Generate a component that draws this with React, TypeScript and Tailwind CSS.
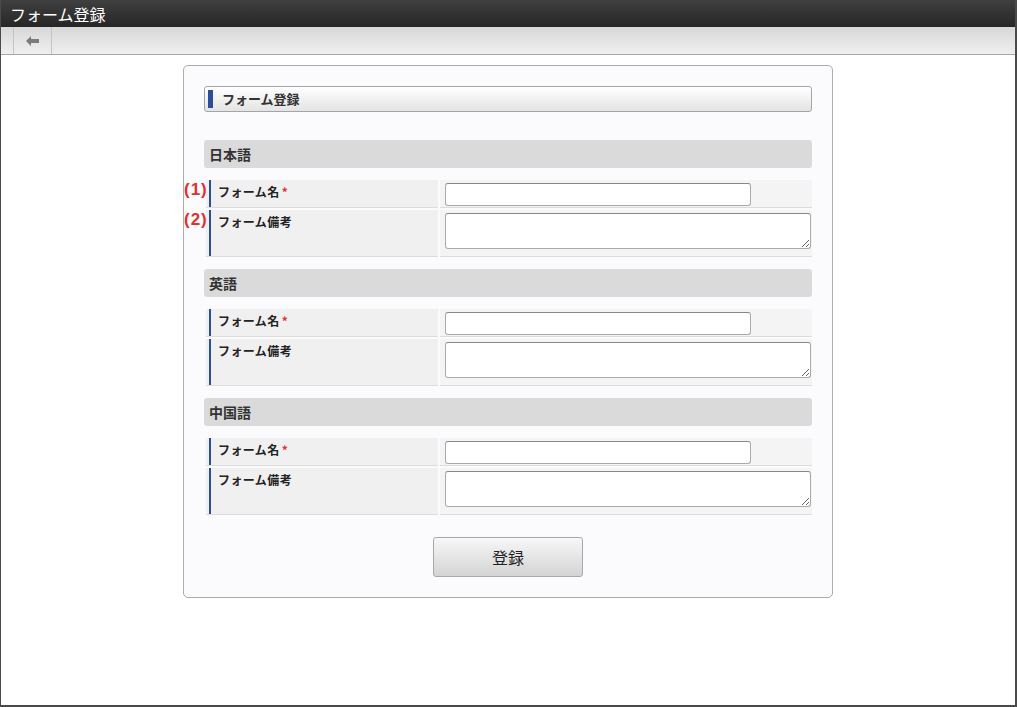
import React from "react";

const font = { fontFamily: '"Noto Sans CJK JP", "Liberation Sans", sans-serif' };

function Row({ label, required, tall, mark }: { label: string; required?: boolean; tall?: boolean; mark?: string }) {
  return (
    <div className="relative flex gap-[2px]">
      {mark && (
        <span className="absolute left-[-22px] top-[0px] text-[17px] leading-[20px] font-bold tracking-[1px] text-[#e0302f] font-['Liberation_Sans',sans-serif]">
          {mark}
        </span>
      )}
      <div className={`w-[232px] bg-[#f0f0f0] border-b border-[#dcdcdc] pl-[3px] ${tall ? "h-[47px]" : "h-[28px]"}`}>
        <div className="h-full border-l-2 border-[#2d4d95] pl-[7px] pt-[4px] text-[12px] leading-[16px]">
          <span className="font-bold text-[#222] tracking-[0.4px]">{label}</span>
          {required && <span className="font-bold text-[#e0302f] ml-[2px]">*</span>}
        </div>
      </div>
      <div className={`flex-1 bg-[#f4f4f4] border-b border-[#dcdcdc] pl-[5px] pr-[1px] pt-[3px] ${tall ? "h-[47px]" : "h-[28px]"}`}>
        {tall ? (
          <textarea className="block w-full h-[36px] bg-white border border-[#aaa] border-t-[#888] rounded-[3px] resize-y" />
        ) : (
          <input className="block w-[306px] h-[23px] bg-white border border-[#aaa] border-t-[#888] rounded-[3px]" />
        )}
      </div>
    </div>
  );
}

function Section({ title, marks }: { title: string; marks?: boolean }) {
  return (
    <div>
      <div className="h-[28px] bg-[#dadada] rounded-[3px] pl-[5px] flex items-center">
        <span className="text-[14px] font-bold text-[#333]">{title}</span>
      </div>
      <div className="mt-[12px] pl-[2px] flex flex-col gap-[2px]">
        <Row label="フォーム名" required mark={marks ? "(1)" : undefined} />
        <Row label="フォーム備考" tall mark={marks ? "(2)" : undefined} />
      </div>
    </div>
  );
}

export default function App() {
  return (
    <div style={font} className="w-[1017px] h-[707px] bg-white border-l border-r-2 border-b-2 border-[#4a4a4a] flex flex-col">
      <div className="h-[27px] shrink-0 bg-gradient-to-b from-[#404040] to-[#262626] flex items-center pl-[9px]">
        <span className="text-white text-[16px] leading-none">フォーム登録</span>
      </div>
      <div className="h-[28px] shrink-0 bg-gradient-to-b from-[#d8d8d8] to-[#efefef] border-b border-[#a8a8a8] flex">
        <div className="ml-[12px] w-[39px] h-full border-l border-r border-[#c4c4c4] flex items-center justify-center">
          <svg width="14" height="10" viewBox="0 0 14 10">
            <path d="M0 5 L5 0 L5 3 L13 3 L13 7 L5 7 L5 10 Z" fill="#7a7a7a" />
          </svg>
        </div>
      </div>
      <div className="mx-auto mt-[10px] w-[650px] bg-[#fbfbfd] border border-[#ababab] rounded-[5px] p-5">
        <div className="h-[26px] border border-[#a5a5a5] rounded-[3px] bg-gradient-to-b from-white to-[#e4e4e4] flex items-center pl-[3px]">
          <div className="w-[5px] h-[18px] bg-[#2d4d95]" />
          <span className="ml-[9px] text-[13px] font-bold text-[#333]">フォーム登録</span>
        </div>
        <div className="mt-[28px] flex flex-col gap-[12px]">
          <Section title="日本語" marks />
          <Section title="英語" />
          <Section title="中国語" />
        </div>
        <div className="mt-[22px] flex justify-center">
          <button className="w-[150px] h-[40px] border border-[#a8a8a8] rounded-[3px] bg-gradient-to-b from-[#f7f7f7] to-[#d4d4d4] text-[16px] text-[#222]">
            登録
          </button>
        </div>
      </div>
    </div>
  );
}
